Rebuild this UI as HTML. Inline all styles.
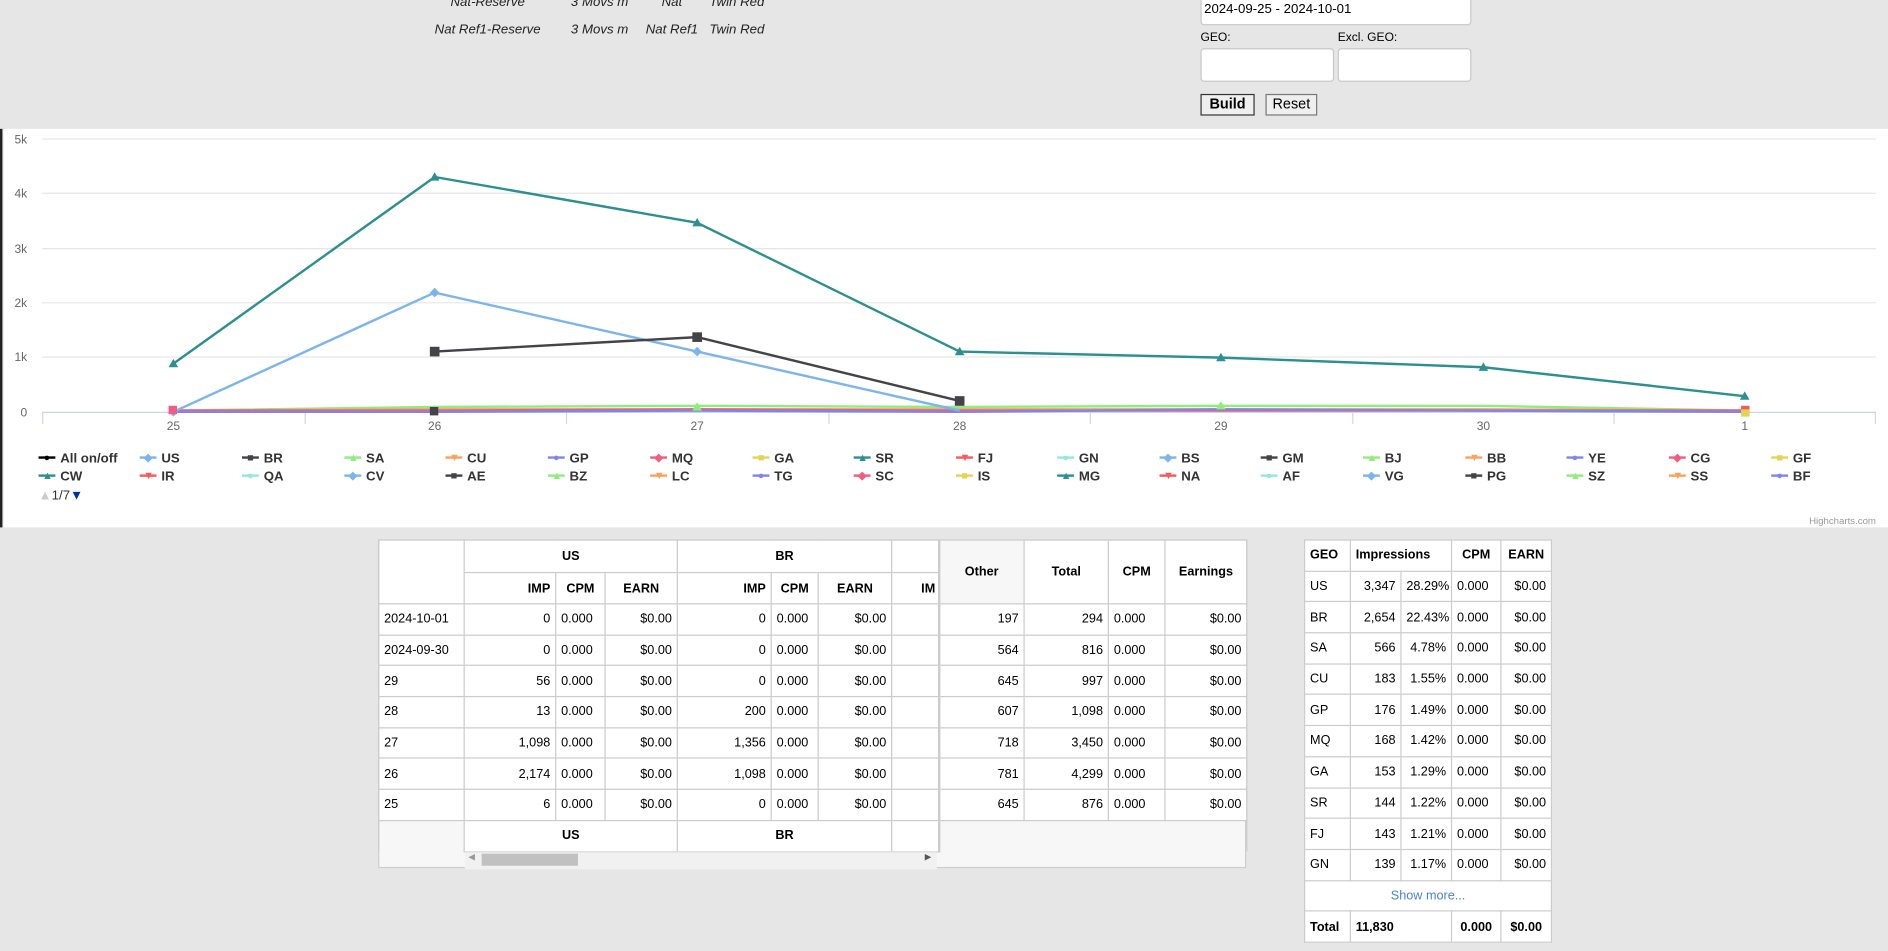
<!DOCTYPE html>
<html><head><meta charset="utf-8">
<style>
html,body{margin:0;padding:0;width:1888px;height:951px;overflow:hidden;background:#e6e6e6;}
#w{position:absolute;left:0;top:0;width:1568px;height:790px;transform:scale(1.20408);transform-origin:0 0;font-family:"Liberation Sans",Arial,sans-serif;font-size:11px;color:#000;}
.a{position:absolute;white-space:nowrap;}
.it{font-style:italic;color:#222;text-align:center;}
.inp{position:absolute;background:#fff;border:1px solid #c8c8c8;border-radius:3px;box-sizing:border-box;}
.btn{position:absolute;border:1px solid #777;background:#efefef;box-sizing:border-box;text-align:center;line-height:15px;font-size:12px;}
#chart{position:absolute;left:3px;top:107px;width:1565px;height:331px;background:#fff;}
.li{position:absolute;font-size:11px;color:#333;font-weight:bold;white-space:nowrap;line-height:13px;}
.li i{display:inline-block;width:14px;height:2px;vertical-align:middle;margin-right:4px;position:relative;top:-1px}
.li b{position:absolute;left:3px;top:-1px;font-size:9px;width:8px;text-align:center;}
table{border-collapse:collapse;table-layout:fixed;position:absolute;font-size:10.5px;}
td,th{border:1px solid #ccc;height:25.7px;padding:0 4px;box-sizing:border-box;white-space:nowrap;overflow:hidden;}
th{font-weight:bold;}
.r{text-align:right}
</style></head><body><div id="w">
<div style="position:absolute;left:0;top:107px;width:2px;height:331px;background:#222"></div>
<div class="a it" style="left:350px;top:-4px;width:110px">Nat-Reserve</div>
<div class="a it" style="left:460px;top:-4px;width:76px">3 Movs m</div>
<div class="a it" style="left:530px;top:-4px;width:56px">Nat</div>
<div class="a it" style="left:586px;top:-4px;width:52px">Twin Red</div>
<div class="a it" style="left:350px;top:19px;width:110px">Nat Ref1-Reserve</div>
<div class="a it" style="left:460px;top:19px;width:76px">3 Movs m</div>
<div class="a it" style="left:530px;top:19px;width:56px">Nat Ref1</div>
<div class="a it" style="left:586px;top:19px;width:52px">Twin Red</div>
<div class="inp" style="left:997px;top:-6px;width:225px;height:27px"></div>
<div class="a" style="left:1000px;top:2px;font-size:11px">2024-09-25 - 2024-10-01</div>
<div class="a" style="left:997px;top:26px;font-size:10px">GEO:</div>
<div class="a" style="left:1111px;top:26px;font-size:10px">Excl. GEO:</div>
<div class="inp" style="left:997px;top:40px;width:111px;height:28px"></div>
<div class="inp" style="left:1111px;top:40px;width:111px;height:28px"></div>
<div class="btn" style="left:997px;top:78px;width:45px;height:18px;font-weight:bold;border-color:#333">Build</div>
<div class="btn" style="left:1051px;top:78px;width:43px;height:18px">Reset</div>

<div id="chart"></div>
<svg class="a" style="left:0;top:107px" width="1568" height="331" viewBox="0 107 1568 331">
<g stroke="#e6e6e6" stroke-width="1">
<line x1="35" y1="115.5" x2="1558" y2="115.5"/><line x1="35" y1="160.5" x2="1558" y2="160.5"/>
<line x1="35" y1="206.5" x2="1558" y2="206.5"/><line x1="35" y1="251.5" x2="1558" y2="251.5"/>
<line x1="35" y1="296.5" x2="1558" y2="296.5"/></g>
<line x1="35" y1="342.5" x2="1558" y2="342.5" stroke="#ccd6eb"/>
<g stroke="#ccd6eb"><line x1="35.5" y1="342" x2="35.5" y2="352"/><line x1="253.5" y1="342" x2="253.5" y2="352"/><line x1="470.5" y1="342" x2="470.5" y2="352"/><line x1="688.5" y1="342" x2="688.5" y2="352"/><line x1="905.5" y1="342" x2="905.5" y2="352"/><line x1="1123.5" y1="342" x2="1123.5" y2="352"/><line x1="1340.5" y1="342" x2="1340.5" y2="352"/><line x1="1557.5" y1="342" x2="1557.5" y2="352"/></g>
<g font-size="10" fill="#666" font-family="Liberation Sans,sans-serif">
<text x="12" y="119">5k</text><text x="12" y="164">4k</text><text x="12" y="210">3k</text><text x="12" y="255">2k</text><text x="12" y="300">1k</text><text x="17" y="346">0</text>
<g text-anchor="middle"><text x="144" y="357">25</text><text x="361" y="357">26</text><text x="579" y="357">27</text><text x="797" y="357">28</text><text x="1014" y="357">29</text><text x="1232" y="357">30</text><text x="1449" y="357">1</text></g>
<text x="1558" y="435" text-anchor="end" font-size="8" fill="#999">Highcharts.com</text>
</g>
<g fill="none" stroke-width="2">
<polyline stroke="#90ed7d" points="144,341 361,338 579,337 797,338 1014,337 1232,337 1449,341"/>
<polyline stroke="#f7a35c" points="144,341 361,340 579,340 797,340 1014,340 1232,340 1449,341"/>
<polyline stroke="#e4d354" points="144,342 361,341 579,341 797,341 1014,341 1232,341 1449,342"/>
<polyline stroke="#f15c80" points="144,341 361,341 579,340 797,341 1014,341 1232,341 1449,341"/>
<polyline stroke="#8085e9" points="144,342 361,342 579,341 797,342 1014,340 1232,341 1449,342"/>
<polyline stroke="#7cb5ec" points="144,342 361,243 579,292 797,341"/>
<polyline stroke="#434348" points="361,292 579,280 797,333"/>
<polyline stroke="#2b908f" points="144,302 361,147 579,185 797,292 1014,297 1232,305 1449,329"/>
</g>
<g fill="#2b908f"><path d="M144,298l4,7h-8z"/><path d="M361,143l4,7h-8z"/><path d="M579,181l4,7h-8z"/><path d="M797,288l4,7h-8z"/><path d="M1014,293l4,7h-8z"/><path d="M1232,301l4,7h-8z"/><path d="M1449,325l4,7h-8z"/></g>
<g fill="#7cb5ec"><path d="M361,239l4,4-4,4-4-4z"/><path d="M579,288l4,4-4,4-4-4z"/><path d="M144,338l4,4-4,4-4-4z"/></g>
<g fill="#434348"><rect x="357" y="288" width="8" height="8"/><rect x="575" y="276" width="8" height="8"/><rect x="793" y="329" width="8" height="8"/><rect x="357" y="338" width="7" height="7"/></g>
<rect x="140" y="337" width="7" height="7" fill="#f15c80"/><rect x="1446" y="337" width="7" height="7" fill="#f45b5b"/><rect x="1446" y="340" width="7" height="6" fill="#e4d354"/>
<path d="M579,334l4,7h-8z" fill="#90ed7d"/><path d="M1014,333l4,7h-8z" fill="#90ed7d"/>
</svg>

<div class="li" style="left:32px;top:375px"><i style="background:#000"></i><b style="color:#000">●</b>All on/off</div>
<div class="li" style="left:116px;top:375px"><i style="background:#7cb5ec"></i><b style="color:#7cb5ec">◆</b>US</div>
<div class="li" style="left:201px;top:375px"><i style="background:#434348"></i><b style="color:#434348">■</b>BR</div>
<div class="li" style="left:286px;top:375px"><i style="background:#90ed7d"></i><b style="color:#90ed7d">▲</b>SA</div>
<div class="li" style="left:370px;top:375px"><i style="background:#f7a35c"></i><b style="color:#f7a35c">▼</b>CU</div>
<div class="li" style="left:455px;top:375px"><i style="background:#8085e9"></i><b style="color:#8085e9">●</b>GP</div>
<div class="li" style="left:540px;top:375px"><i style="background:#f15c80"></i><b style="color:#f15c80">◆</b>MQ</div>
<div class="li" style="left:625px;top:375px"><i style="background:#e4d354"></i><b style="color:#e4d354">■</b>GA</div>
<div class="li" style="left:709px;top:375px"><i style="background:#2b908f"></i><b style="color:#2b908f">▲</b>SR</div>
<div class="li" style="left:794px;top:375px"><i style="background:#f45b5b"></i><b style="color:#f45b5b">▼</b>FJ</div>
<div class="li" style="left:878px;top:375px"><i style="background:#91e8e1"></i><b style="color:#91e8e1">●</b>GN</div>
<div class="li" style="left:963px;top:375px"><i style="background:#7cb5ec"></i><b style="color:#7cb5ec">◆</b>BS</div>
<div class="li" style="left:1047px;top:375px"><i style="background:#434348"></i><b style="color:#434348">■</b>GM</div>
<div class="li" style="left:1132px;top:375px"><i style="background:#90ed7d"></i><b style="color:#90ed7d">▲</b>BJ</div>
<div class="li" style="left:1217px;top:375px"><i style="background:#f7a35c"></i><b style="color:#f7a35c">▼</b>BB</div>
<div class="li" style="left:1301px;top:375px"><i style="background:#8085e9"></i><b style="color:#8085e9">●</b>YE</div>
<div class="li" style="left:1386px;top:375px"><i style="background:#f15c80"></i><b style="color:#f15c80">◆</b>CG</div>
<div class="li" style="left:1471px;top:375px"><i style="background:#e4d354"></i><b style="color:#e4d354">■</b>GF</div>

<div class="li" style="left:32px;top:390px"><i style="background:#2b908f"></i><b style="color:#2b908f">▲</b>CW</div>
<div class="li" style="left:116px;top:390px"><i style="background:#f45b5b"></i><b style="color:#f45b5b">▼</b>IR</div>
<div class="li" style="left:201px;top:390px"><i style="background:#91e8e1"></i><b style="color:#91e8e1">●</b>QA</div>
<div class="li" style="left:286px;top:390px"><i style="background:#7cb5ec"></i><b style="color:#7cb5ec">◆</b>CV</div>
<div class="li" style="left:370px;top:390px"><i style="background:#434348"></i><b style="color:#434348">■</b>AE</div>
<div class="li" style="left:455px;top:390px"><i style="background:#90ed7d"></i><b style="color:#90ed7d">▲</b>BZ</div>
<div class="li" style="left:540px;top:390px"><i style="background:#f7a35c"></i><b style="color:#f7a35c">▼</b>LC</div>
<div class="li" style="left:625px;top:390px"><i style="background:#8085e9"></i><b style="color:#8085e9">●</b>TG</div>
<div class="li" style="left:709px;top:390px"><i style="background:#f15c80"></i><b style="color:#f15c80">◆</b>SC</div>
<div class="li" style="left:794px;top:390px"><i style="background:#e4d354"></i><b style="color:#e4d354">■</b>IS</div>
<div class="li" style="left:878px;top:390px"><i style="background:#2b908f"></i><b style="color:#2b908f">▲</b>MG</div>
<div class="li" style="left:963px;top:390px"><i style="background:#f45b5b"></i><b style="color:#f45b5b">▼</b>NA</div>
<div class="li" style="left:1047px;top:390px"><i style="background:#91e8e1"></i><b style="color:#91e8e1">●</b>AF</div>
<div class="li" style="left:1132px;top:390px"><i style="background:#7cb5ec"></i><b style="color:#7cb5ec">◆</b>VG</div>
<div class="li" style="left:1217px;top:390px"><i style="background:#434348"></i><b style="color:#434348">■</b>PG</div>
<div class="li" style="left:1301px;top:390px"><i style="background:#90ed7d"></i><b style="color:#90ed7d">▲</b>SZ</div>
<div class="li" style="left:1386px;top:390px"><i style="background:#f7a35c"></i><b style="color:#f7a35c">▼</b>SS</div>
<div class="li" style="left:1471px;top:390px"><i style="background:#8085e9"></i><b style="color:#8085e9">●</b>BF</div>
<div class="a" style="left:32px;top:406px;font-size:11px;color:#333"><span style="color:#ccc">▲</span>1/7<span style="color:#003399">▼</span></div>

<!-- left table -->
<div style="position:absolute;left:314px;top:448px;width:721px;height:273px;background:#f7f7f7;border:1px solid #ccc;box-sizing:border-box"></div>
<table style="left:314px;top:448px;width:721px">
<colgroup><col style="width:71px"><col style="width:76px"><col style="width:41px"><col style="width:60px"><col style="width:78px"><col style="width:39px"><col style="width:61px"><col style="width:39px"><col style="width:71px"><col style="width:70px"><col style="width:47px"><col style="width:68px"></colgroup>
<tr style="background:#fff"><td rowspan="2"></td><th colspan="3" style="height:27px">US</th><th colspan="3">BR</th><th style="text-align:left;padding:0">&nbsp;</th><th rowspan="2" style="background:#f7f7f7;border-left:2px solid #ccc">Other</th><th rowspan="2">Total</th><th rowspan="2">CPM</th><th rowspan="2">Earnings</th></tr>
<tr style="background:#fff"><th class="r" style="height:26px">IMP</th><th>CPM</th><th>EARN</th><th class="r">IMP</th><th>CPM</th><th>EARN</th><th style="text-align:left;padding:0 0 0 24px">IM</th></tr>
<tr style="background:#fff"><td>2024-10-01</td><td class="r">0</td><td>0.000</td><td class="r">$0.00</td><td class="r">0</td><td>0.000</td><td class="r">$0.00</td><td></td><td class="r" style="border-left:2px solid #ccc">197</td><td class="r">294</td><td>0.000</td><td class="r">$0.00</td></tr>
<tr style="background:#fff"><td>2024-09-30</td><td class="r">0</td><td>0.000</td><td class="r">$0.00</td><td class="r">0</td><td>0.000</td><td class="r">$0.00</td><td></td><td class="r" style="border-left:2px solid #ccc">564</td><td class="r">816</td><td>0.000</td><td class="r">$0.00</td></tr>
<tr style="background:#fff"><td>29</td><td class="r">56</td><td>0.000</td><td class="r">$0.00</td><td class="r">0</td><td>0.000</td><td class="r">$0.00</td><td></td><td class="r" style="border-left:2px solid #ccc">645</td><td class="r">997</td><td>0.000</td><td class="r">$0.00</td></tr>
<tr style="background:#fff"><td>28</td><td class="r">13</td><td>0.000</td><td class="r">$0.00</td><td class="r">200</td><td>0.000</td><td class="r">$0.00</td><td></td><td class="r" style="border-left:2px solid #ccc">607</td><td class="r">1,098</td><td>0.000</td><td class="r">$0.00</td></tr>
<tr style="background:#fff"><td>27</td><td class="r">1,098</td><td>0.000</td><td class="r">$0.00</td><td class="r">1,356</td><td>0.000</td><td class="r">$0.00</td><td></td><td class="r" style="border-left:2px solid #ccc">718</td><td class="r">3,450</td><td>0.000</td><td class="r">$0.00</td></tr>
<tr style="background:#fff"><td>26</td><td class="r">2,174</td><td>0.000</td><td class="r">$0.00</td><td class="r">1,098</td><td>0.000</td><td class="r">$0.00</td><td></td><td class="r" style="border-left:2px solid #ccc">781</td><td class="r">4,299</td><td>0.000</td><td class="r">$0.00</td></tr>
<tr style="background:#fff"><td>25</td><td class="r">6</td><td>0.000</td><td class="r">$0.00</td><td class="r">0</td><td>0.000</td><td class="r">$0.00</td><td></td><td class="r" style="border-left:2px solid #ccc">645</td><td class="r">876</td><td>0.000</td><td class="r">$0.00</td></tr>
<tr><td style="border-bottom:none"></td><th colspan="3" style="background:#fff">US</th><th colspan="3" style="background:#fff">BR</th><td style="background:#fff"></td><td colspan="4" style="border-bottom:none;border-left:2px solid #ccc"></td></tr>
</table>
<div style="position:absolute;left:386px;top:707px;width:392px;height:14px;background:#f1f1f1;border-top:1px solid #ddd"></div>
<div style="position:absolute;left:400px;top:709px;width:80px;height:10px;background:#c1c1c1"></div>
<div class="a" style="left:389px;top:708px;font-size:7px;color:#999">◀</div>
<div class="a" style="left:768px;top:708px;font-size:7px;color:#555">▶</div>

<!-- right table -->
<table style="left:1083px;top:448px;width:205px;background:#fff">
<colgroup><col style="width:38px"><col style="width:42px"><col style="width:42px"><col style="width:41px"><col style="width:42px"></colgroup>
<tr><th style="text-align:left">GEO</th><th colspan="2" style="text-align:left">Impressions</th><th>CPM</th><th>EARN</th></tr>
<tr><td>US</td><td class="r">3,347</td><td class="r">28.29%</td><td>0.000</td><td class="r">$0.00</td></tr>
<tr><td>BR</td><td class="r">2,654</td><td class="r">22.43%</td><td>0.000</td><td class="r">$0.00</td></tr>
<tr><td>SA</td><td class="r">566</td><td class="r">4.78%</td><td>0.000</td><td class="r">$0.00</td></tr>
<tr><td>CU</td><td class="r">183</td><td class="r">1.55%</td><td>0.000</td><td class="r">$0.00</td></tr>
<tr><td>GP</td><td class="r">176</td><td class="r">1.49%</td><td>0.000</td><td class="r">$0.00</td></tr>
<tr><td>MQ</td><td class="r">168</td><td class="r">1.42%</td><td>0.000</td><td class="r">$0.00</td></tr>
<tr><td>GA</td><td class="r">153</td><td class="r">1.29%</td><td>0.000</td><td class="r">$0.00</td></tr>
<tr><td>SR</td><td class="r">144</td><td class="r">1.22%</td><td>0.000</td><td class="r">$0.00</td></tr>
<tr><td>FJ</td><td class="r">143</td><td class="r">1.21%</td><td>0.000</td><td class="r">$0.00</td></tr>
<tr><td>GN</td><td class="r">139</td><td class="r">1.17%</td><td>0.000</td><td class="r">$0.00</td></tr>
<tr><td colspan="5" style="text-align:center;color:#4a86c8">Show more...</td></tr>
<tr><th style="text-align:left">Total</th><th colspan="2" style="text-align:left">11,830</th><th>0.000</th><th>$0.00</th></tr>
</table>
</div></body></html>
